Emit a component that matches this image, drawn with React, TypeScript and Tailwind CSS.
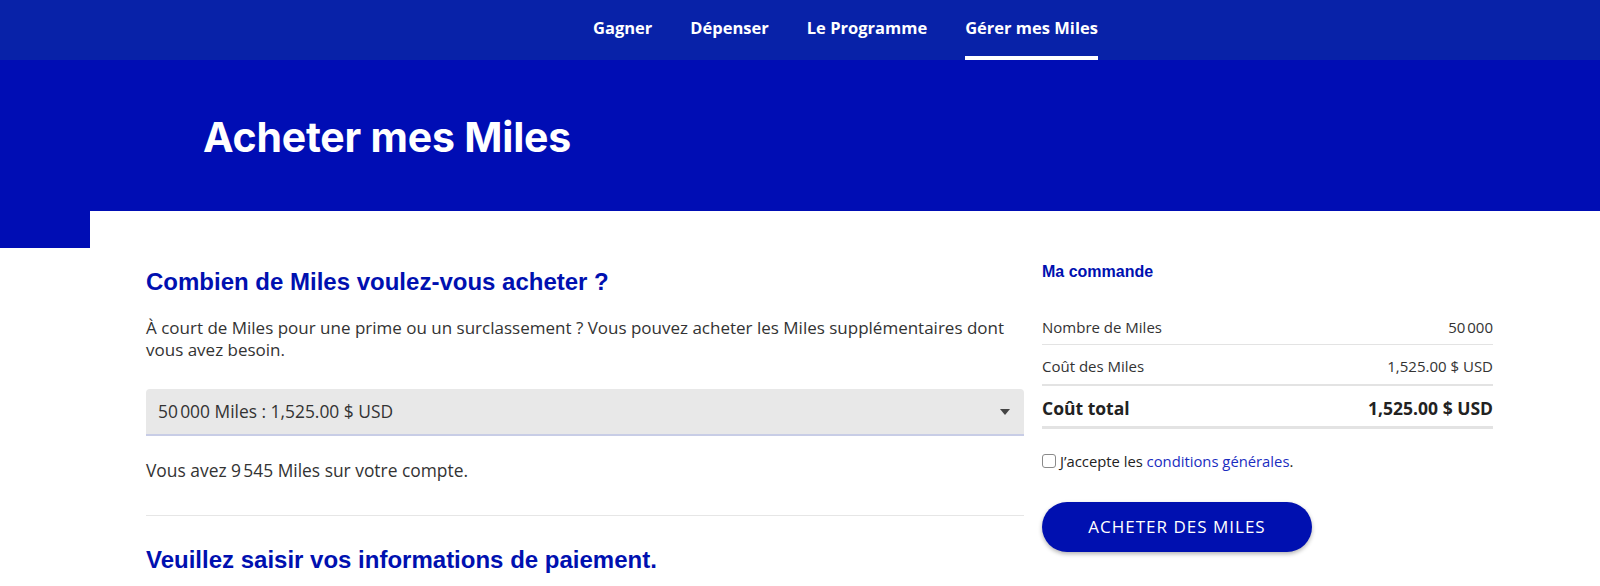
import React from 'react';

const navItems = ['Gagner', 'Dépenser', 'Le Programme', 'Gérer mes Miles'];

const App: React.FC = () => {
  return (
    <div className="w-[1600px] h-[586px] overflow-hidden bg-white" style={{ fontFamily: '"Open Sans", sans-serif' }}>
      {/* Top nav */}
      <nav className="h-[60px] bg-[#0822a8] flex items-stretch pl-[593px] gap-[38px]">
        {navItems.map((item, i) => (
          <a
            key={item}
            href="#"
            className={`flex items-center text-[16.5px] font-bold text-white border-b-4 ${
              i === navItems.length - 1 ? 'border-white' : 'border-transparent'
            }`}
          >
            {item}
          </a>
        ))}
      </nav>

      {/* Hero */}
      <div className="h-[151px] bg-[#000db4] flex items-center pl-[203px] pt-[4px]">
        <h1 className="text-[41px] font-bold text-white tracking-[-0.2px]" style={{ fontFamily: 'Inter, sans-serif' }}>
          Acheter mes Miles
        </h1>
      </div>

      <div className="flex">
        <div className="w-[90px]">
          <div className="h-[37px] bg-[#000db4]" />
        </div>

        <div className="flex gap-[18px] pl-[56px]">
          {/* Left column */}
          <div className="w-[878px] pt-[57px]">
            <h2 className="text-[24px] leading-[28px] font-bold text-[#0010b0]" style={{ fontFamily: '"Liberation Sans", Arial, sans-serif' }}>
              Combien de Miles voulez-vous acheter ?
            </h2>
            <p className="mt-[21px] text-[17px] leading-[22px] text-[#333]">
              À court de Miles pour une prime ou un surclassement ? Vous pouvez acheter les Miles supplémentaires dont vous avez besoin.
            </p>
            <div className="mt-[28px] h-[47px] bg-[#e8e8e8] rounded-t-[4px] border-b-2 border-[#c8cde6] flex items-center justify-between pl-[12px] pr-[14px]">
              <span className="text-[17.4px] text-[#333]">50{'\u202f'}000 Miles : 1,525.00 $ USD</span>
              <svg width="10" height="6" viewBox="0 0 10 6">
                <path d="M0 0 L10 0 L5 6 Z" fill="#444" />
              </svg>
            </div>
            <p className="mt-[23px] text-[17.4px] leading-[22px] text-[#333]">Vous avez 9{'\u202f'}545 Miles sur votre compte.</p>
            <div className="mt-[34px] border-t border-[#e6e6e6]" />
            <h2 className="mt-[30px] text-[24px] leading-[28px] font-bold text-[#0010b0]" style={{ fontFamily: '"Liberation Sans", Arial, sans-serif' }}>
              Veuillez saisir vos informations de paiement.
            </h2>
          </div>

          {/* Right column */}
          <div className="w-[451px] pt-[51px]">
            <h3 className="text-[16px] leading-[20px] font-bold text-[#0010b0]" style={{ fontFamily: '"Liberation Sans", Arial, sans-serif' }}>
              Ma commande
            </h3>
            <div className="mt-[28px] text-[15px] text-[#333]">
              <div className="h-[35px] flex items-center justify-between border-b border-[#e3e3e3]">
                <span>Nombre de Miles</span>
                <span>50{'\u202f'}000</span>
              </div>
              <div className="h-[41px] pt-[4px] flex items-center justify-between border-b-2 border-[#e3e3e3]">
                <span>Coût des Miles</span>
                <span>1,525.00 $ USD</span>
              </div>
              <div className="h-[43px] pt-[5px] flex items-center justify-between border-b-[3px] border-[#e3e3e3] text-[17.5px] font-bold text-[#222]">
                <span>Coût total</span>
                <span>1,525.00 $ USD</span>
              </div>
            </div>
            <label className="mt-[21px] flex items-center gap-[4px] text-[14.8px] text-[#222]">
              <span className="w-[14px] h-[14px] border border-[#8a8a8a] rounded-[3px] bg-white" />
              <span>
                J’accepte les <a href="#" className="text-[#1a2dbf]">conditions générales</a>.
              </span>
            </label>
            <button className="mt-[30px] w-[270px] h-[50px] rounded-full bg-[#0010b0] text-white text-[17px] tracking-[1px] shadow-[0_2px_4px_rgba(0,0,0,0.3)]">
              ACHETER DES MILES
            </button>
          </div>
        </div>
      </div>
    </div>
  );
};

export default App;
